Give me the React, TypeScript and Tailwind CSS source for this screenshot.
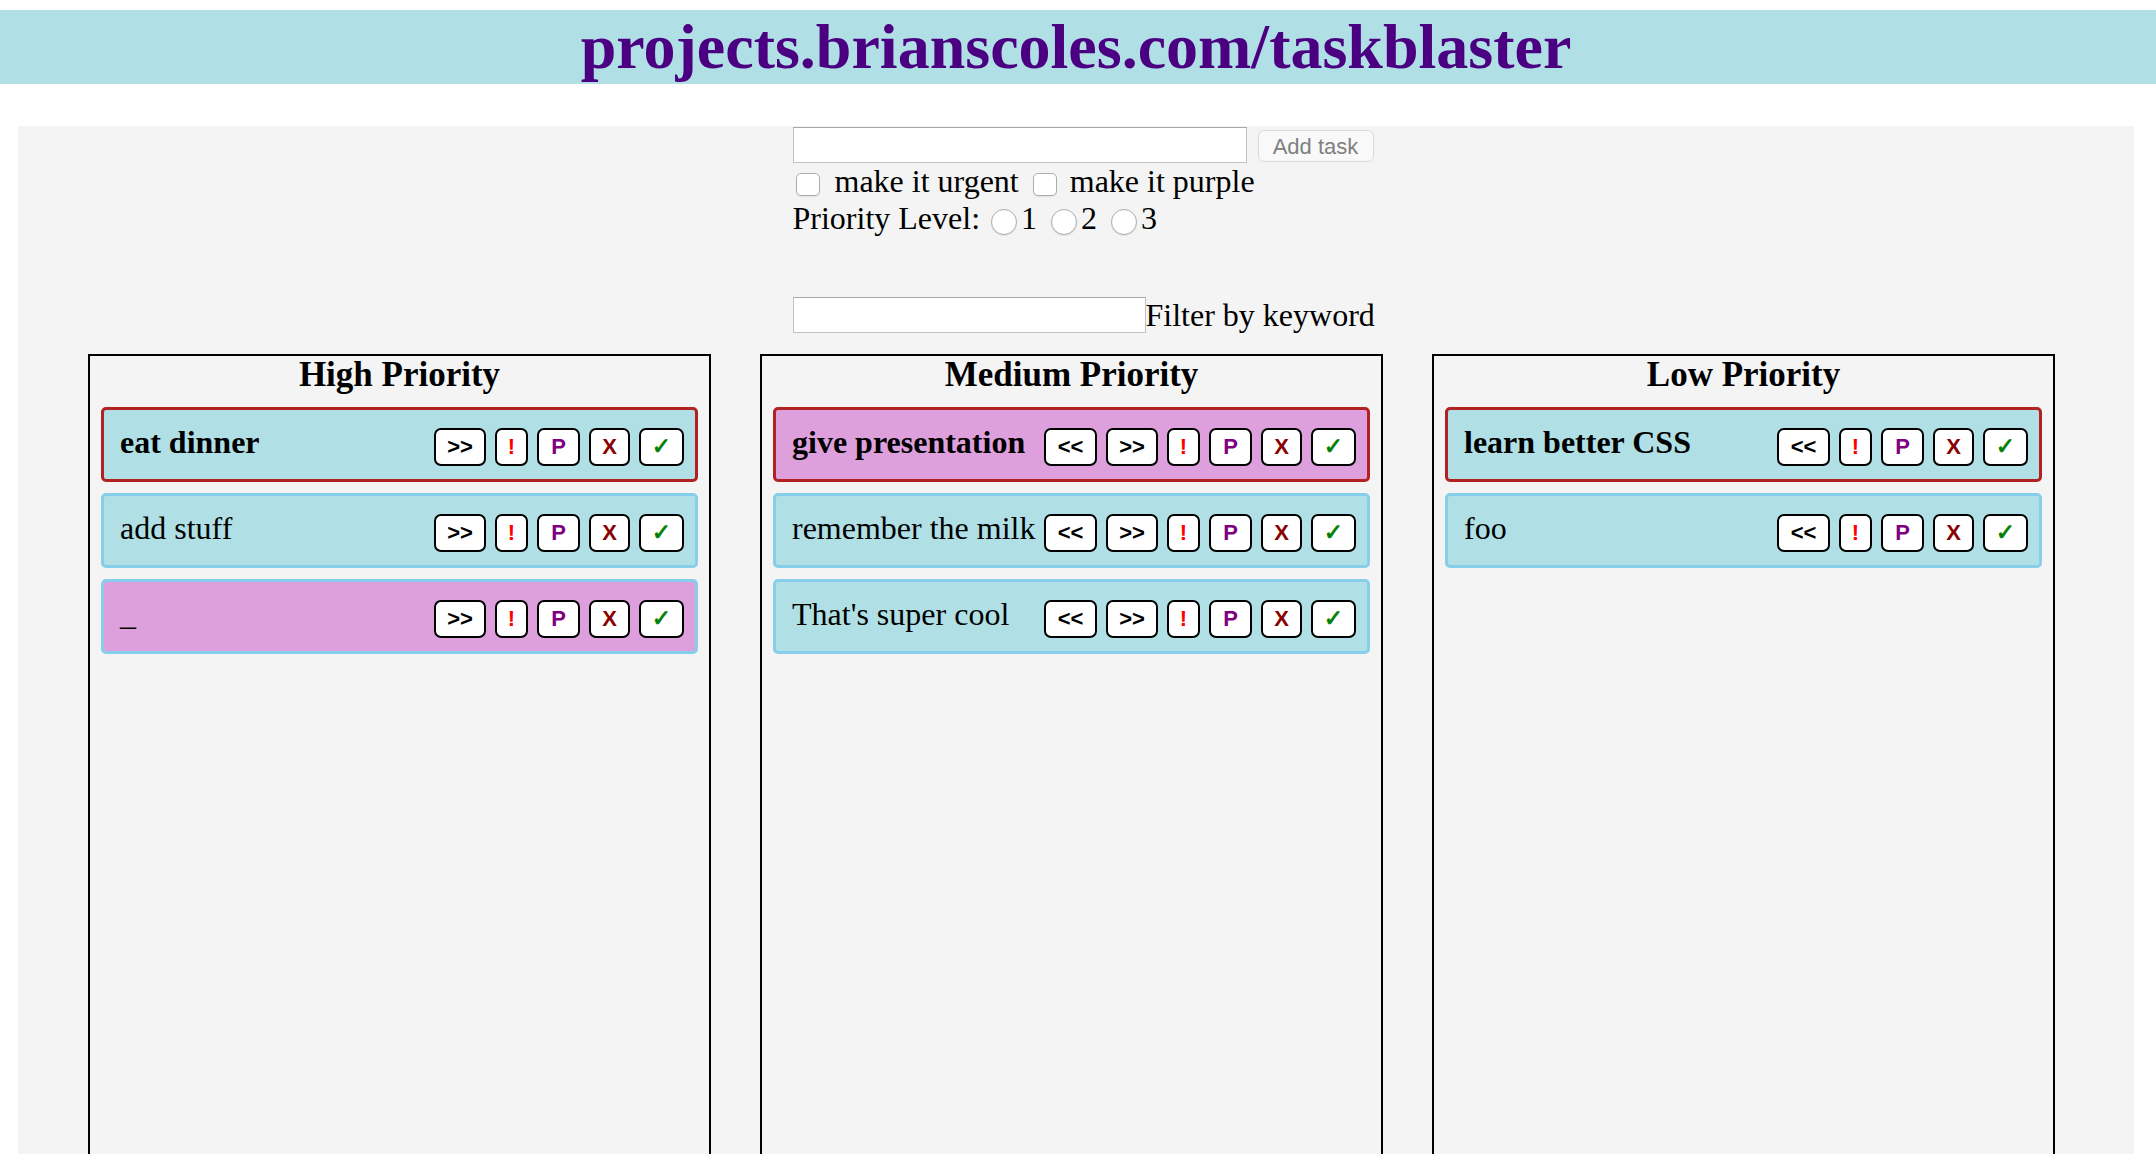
import React from "react";

type Task = { text: string; urgent?: boolean; purple?: boolean };

const columns: { title: string; left: boolean; right: boolean; tasks: Task[] }[] = [
  {
    title: "High Priority",
    left: false,
    right: true,
    tasks: [
      { text: "eat dinner", urgent: true },
      { text: "add stuff" },
      { text: "_", purple: true },
    ],
  },
  {
    title: "Medium Priority",
    left: true,
    right: true,
    tasks: [
      { text: "give presentation", urgent: true, purple: true },
      { text: "remember the milk" },
      { text: "That's super cool" },
    ],
  },
  {
    title: "Low Priority",
    left: true,
    right: false,
    tasks: [{ text: "learn better CSS", urgent: true }, { text: "foo" }],
  },
];

const btnBase =
  "h-[38px] shrink-0 flex items-center justify-center bg-white border-2 border-black rounded-[7px] font-bold text-[22px] leading-none";
const sans = { fontFamily: '"Liberation Sans", Arial, sans-serif' };

function Buttons({ left, right }: { left: boolean; right: boolean }) {
  return (
    <div className="flex items-center gap-[9px] mt-[4px]" style={sans}>
      {left && <div className={`${btnBase} w-[53px] text-black`}>&lt;&lt;</div>}
      {right && <div className={`${btnBase} w-[52px] text-black`}>&gt;&gt;</div>}
      <div className={`${btnBase} w-[33px] text-[#ff0000]`}>!</div>
      <div className={`${btnBase} w-[43px] text-[#800080]`}>P</div>
      <div className={`${btnBase} w-[41px] text-[#8b0000]`}>X</div>
      <div
        className={`${btnBase} w-[45px] text-[#008000] text-[23px] [-webkit-text-stroke:0.8px_#008000]`}
        style={{ fontFamily: '"DejaVu Sans", sans-serif' }}
      >
        ✓
      </div>
    </div>
  );
}

export default function App() {
  return (
    <div
      className="bg-white text-black text-[32px] min-h-screen overflow-hidden"
      style={{ fontFamily: '"Liberation Serif", "Times New Roman", serif' }}
    >
      <h1 className="mt-[10px] h-[74px] bg-[#b0e0e6] text-[#4b0082] text-[64px] font-bold leading-[74px] text-center pr-[4px]">
        projects.brianscoles.com/taskblaster
      </h1>

      <div className="mt-[42px] ml-[18px] mr-[22px] bg-[#f4f4f4] pb-[40px]">
        <div className="flex justify-center">
          <div className="w-[584px] ml-[17px]">
            <div className="flex items-center gap-[11px] pt-[1px]">
              <input
                type="text"
                className="w-[454px] h-[36px] bg-white border border-[#c2c2c2] border-t-[#a8a8a8] outline-none"
              />
              <button
                className="w-[116px] h-[32px] mt-[1px] pt-[3px] rounded-[6px] bg-[#f9f9f9] border border-[#d9d9d9] text-[#808080] text-[22px] leading-none"
                style={sans}
              >
                Add task
              </button>
            </div>

            <div className="flex items-start h-[37px] leading-[37px]">
              <span className="mt-[10px] ml-[3px] w-[24px] h-[23px] rounded-[5px] border border-[#adadad] bg-white shadow-[0_1px_1px_rgba(0,0,0,0.08)] shrink-0" />
              <span className="ml-[15px]">make it urgent</span>
              <span className="mt-[10px] ml-[14px] w-[24px] h-[23px] rounded-[5px] border border-[#adadad] bg-white shadow-[0_1px_1px_rgba(0,0,0,0.08)] shrink-0" />
              <span className="ml-[13px]">make it purple</span>
            </div>

            <div className="flex items-start h-[37px] leading-[37px]">
              <span>Priority Level:</span>
              <span className="mt-[9px] ml-[11px] w-[26px] h-[26px] rounded-full border border-[#adadad] bg-white shadow-[0_1px_1px_rgba(0,0,0,0.08)] shrink-0" />
              <span className="ml-[4px]">1</span>
              <span className="mt-[9px] ml-[14px] w-[26px] h-[26px] rounded-full border border-[#adadad] bg-white shadow-[0_1px_1px_rgba(0,0,0,0.08)] shrink-0" />
              <span className="ml-[4px]">2</span>
              <span className="mt-[9px] ml-[14px] w-[26px] h-[26px] rounded-full border border-[#adadad] bg-white shadow-[0_1px_1px_rgba(0,0,0,0.08)] shrink-0" />
              <span className="ml-[4px]">3</span>
            </div>

            <div className="flex items-center mt-[60px] h-[36px]">
              <input
                type="text"
                className="w-[353px] h-[36px] bg-white border border-[#c2c2c2] border-t-[#a8a8a8] outline-none"
              />
              <span className="leading-[37px]">Filter by keyword</span>
            </div>
          </div>
        </div>

        <div className="flex gap-[49px] pl-[70px] mt-[21px]">
          {columns.map((col) => (
            <div
              key={col.title}
              className="w-[623px] h-[820px] border-2 border-black px-[11px] shrink-0"
            >
              <h2 className="text-center font-bold text-[35px] leading-[38px]">{col.title}</h2>
              <div className="flex flex-col gap-[11px] mt-[13px]">
                {col.tasks.map((t, i) => (
                  <div
                    key={i}
                    className={`h-[75px] border-[3px] rounded-[5px] flex items-center justify-between pl-[16px] pr-[11px] ${
                      t.urgent ? "border-[#b22222]" : "border-[#87ceeb]"
                    } ${t.purple ? "bg-[#dda0dd]" : "bg-[#b0e0e6]"}`}
                  >
                    <span
                      className={`leading-[37px] mb-[4px] whitespace-nowrap ${
                        t.urgent ? "font-bold" : ""
                      }`}
                    >
                      {t.text}
                    </span>
                    <Buttons left={col.left} right={col.right} />
                  </div>
                ))}
              </div>
            </div>
          ))}
        </div>
      </div>
    </div>
  );
}
